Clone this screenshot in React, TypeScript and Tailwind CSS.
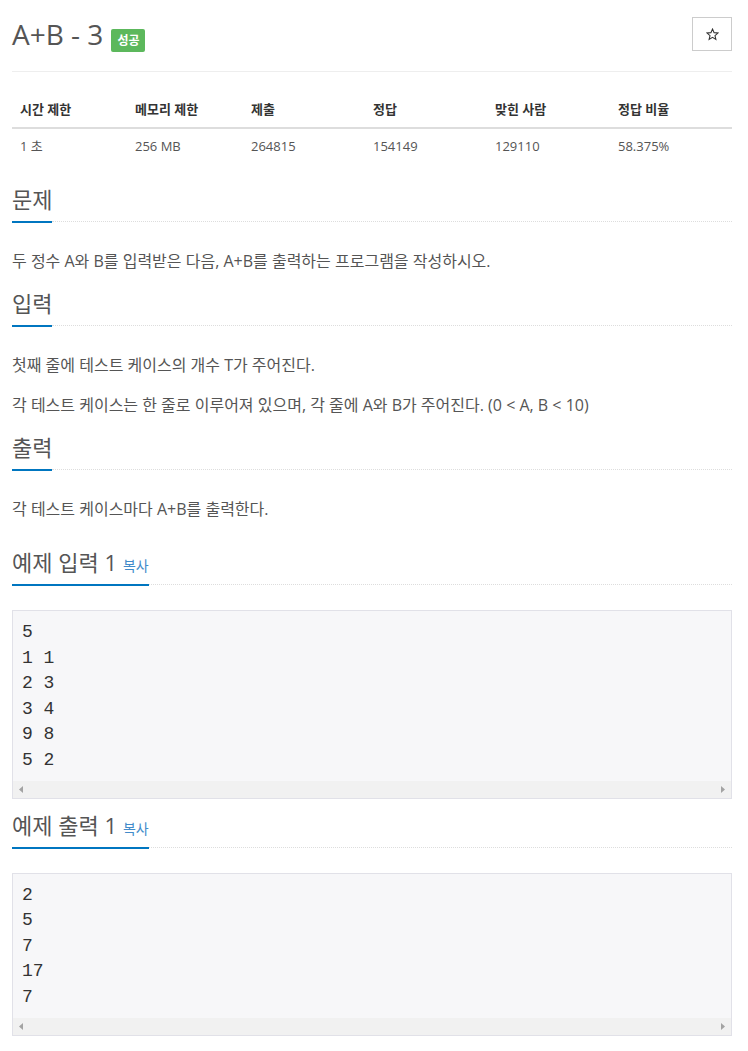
import React from "react";

function Heading({ title, copy }: { title: string; copy?: boolean }) {
  return (
    <div className="flex">
      <div className="border-b-2 border-[#0076c0] pb-[11px] text-[22px] leading-[22px] text-[#555] whitespace-nowrap">
        {title}
        {copy && <span className="ml-[6px] text-[14px] leading-none text-[#428bca]">복사</span>}
      </div>
      <div className="mb-[1px] flex-1 border-b border-dotted border-[#ddd]" />
    </div>
  );
}

function Arrow({ dir }: { dir: "left" | "right" }) {
  return (
    <svg width="4" height="7" viewBox="0 0 4 7">
      <polygon points={dir === "left" ? "4,0 0,3.5 4,7" : "0,0 4,3.5 0,7"} fill="#a3a3a3" />
    </svg>
  );
}

function Sample({ text }: { text: string }) {
  return (
    <div className="mt-[24px] border border-[#e1e1e8] bg-[#f7f7f9]">
      <pre className="px-[9px] pt-[9px] pb-[7px] font-['Liberation_Mono',monospace] text-[18px] leading-[25.6px] text-[#333]">
        {text}
      </pre>
      <div className="flex h-[17px] items-center justify-between bg-[#f1f1f1] px-[6px]">
        <Arrow dir="left" />
        <Arrow dir="right" />
      </div>
    </div>
  );
}

const cols = [
  { h: "시간 제한", v: "1 초", w: "w-[115px]" },
  { h: "메모리 제한", v: "256 MB", w: "w-[116px]" },
  { h: "제출", v: "264815", w: "w-[122px]" },
  { h: "정답", v: "154149", w: "w-[122px]" },
  { h: "맞힌 사람", v: "129110", w: "w-[123px]" },
  { h: "정답 비율", v: "58.375%", w: "w-[122px]" },
];

export default function App() {
  return (
    <div className="min-h-[1051px] bg-white pl-[12px] pr-[16px] font-['Open_Sans','Noto_Sans_CJK_KR',sans-serif]">
      <div className="flex justify-between pt-[16px]">
        <div className="flex items-start">
          <h1 className="text-[28px] leading-[36px] text-[#555]">A+B - 3</h1>
          <span className="ml-[8px] mt-[13px] h-[23px] rounded-[2px] bg-[#5cb85c] px-[6px] text-[12px] font-bold leading-[23px] text-white">
            성공
          </span>
        </div>
        <button className="mt-[1px] flex h-[34px] w-[40px] items-center justify-center border border-[#ccc] bg-white">
          <svg width="13" height="13" viewBox="0 0 24 24">
            <polygon
              points="12,2 14.9,8.6 22,9.3 16.6,14 18.2,21 12,17.3 5.8,21 7.4,14 2,9.3 9.1,8.6"
              fill="none"
              stroke="#333"
              strokeWidth="2"
              strokeLinejoin="miter"
            />
          </svg>
        </button>
      </div>
      <div className="mt-[19px] border-t border-[#eee]" />
      <table className="mt-[19px] w-full table-fixed border-separate border-spacing-0 text-[13px]">
        <thead>
          <tr>
            {cols.map((c) => (
              <th
                key={c.h}
                className={`${c.w} border-b-2 border-[#ddd] py-[8px] pl-[8px] text-left font-bold leading-[20px] text-[#333]`}
              >
                {c.h}
              </th>
            ))}
          </tr>
        </thead>
        <tbody>
          <tr>
            {cols.map((c) => (
              <td key={c.h} className="py-[8px] pl-[8px] leading-[18px] text-[#555]">
                {c.v}
              </td>
            ))}
          </tr>
        </tbody>
      </table>

      <div className="mt-[25px]">
        <Heading title="문제" />
        <div className="mt-[26px] text-[16px] leading-[25px] text-[#555]">
          <p>두 정수 A와 B를 입력받은 다음, A+B를 출력하는 프로그램을 작성하시오.</p>
        </div>
      </div>

      <div className="mt-[18px]">
        <Heading title="입력" />
        <div className="mt-[26px] flex flex-col gap-[15px] text-[16px] leading-[25px] text-[#555]">
          <p>첫째 줄에 테스트 케이스의 개수 T가 주어진다.</p>
          <p>각 테스트 케이스는 한 줄로 이루어져 있으며, 각 줄에 A와 B가 주어진다. (0 &lt; A, B &lt; 10)</p>
        </div>
      </div>

      <div className="mt-[18px]">
        <Heading title="출력" />
        <div className="mt-[26px] text-[16px] leading-[25px] text-[#555]">
          <p>각 테스트 케이스마다 A+B를 출력한다.</p>
        </div>
      </div>

      <div className="mt-[29px]">
        <Heading title="예제 입력 1" copy />
        <Sample text={"5\n1 1\n2 3\n3 4\n9 8\n5 2"} />
      </div>

      <div className="mt-[15px]">
        <Heading title="예제 출력 1" copy />
        <Sample text={"2\n5\n7\n17\n7"} />
      </div>
    </div>
  );
}
